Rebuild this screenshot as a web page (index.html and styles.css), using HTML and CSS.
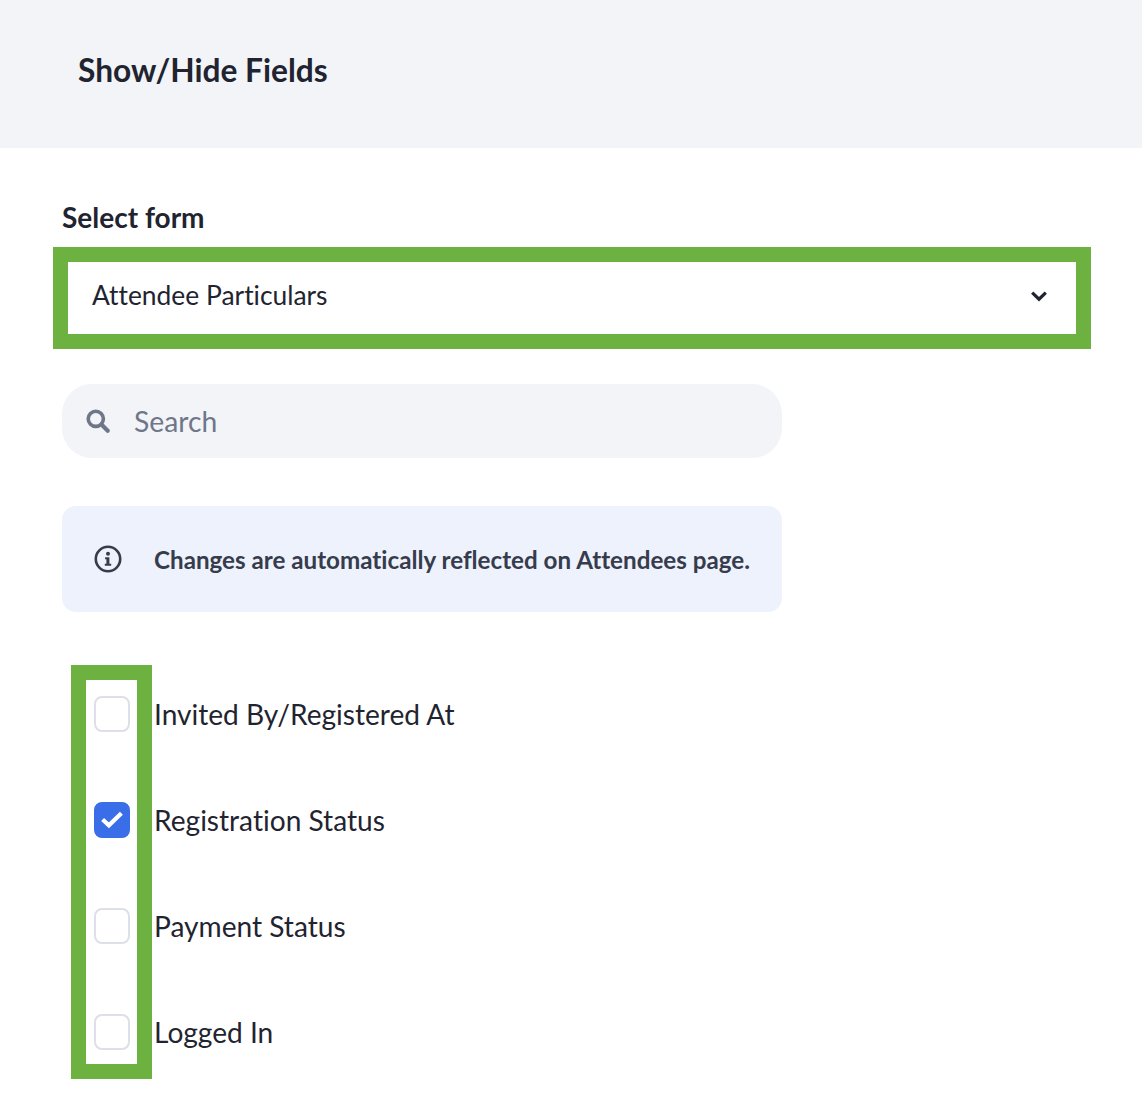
FILE: index.html
```html
<!DOCTYPE html>
<html lang="en">
<head>
<meta charset="utf-8">
<title>Show/Hide Fields</title>
<link rel="stylesheet" href="styles.css">
</head>
<body>
<div class="page">
  <header class="header"><h1 class="title">Show/Hide Fields</h1></header>
  <main class="content">
    <div class="label">Select form</div>
    <div class="select">
      <span>Attendee Particulars</span>
      <svg class="chevron" width="18" height="12" viewBox="0 0 18 12"><path d="M2.2 2.6 9 9.2l6.8-6.6" fill="none" stroke="#1f2430" stroke-width="3.2"/></svg>
    </div>
    <div class="search">
      <svg class="search-icon" width="26" height="26" viewBox="0 0 26 26"><circle cx="10.8" cy="10.8" r="7.6" fill="none" stroke="#6f7689" stroke-width="3.6"/><path d="m16.5 16.5 6.2 6.2" stroke="#6f7689" stroke-width="4.2" stroke-linecap="round"/></svg>
      <span class="search-text">Search</span>
    </div>
    <div class="info">
      <svg class="info-icon" width="28" height="28" viewBox="0 0 28 28"><circle cx="14" cy="14" r="12.2" fill="none" stroke="#363c4c" stroke-width="2.6"/><circle cx="14" cy="8.7" r="2" fill="#363c4c"/><path d="M11.2 12.2H15.4v6.6h1.8v2h-6.4v-2h1.6v-4.6h-1.4z" fill="#363c4c"/></svg>
      <span>Changes are automatically reflected on Attendees page.</span>
    </div>
    <ul class="fields">
      <li class="field"><span class="box"></span><span>Invited By/Registered At</span></li>
      <li class="field"><span class="box checked"><svg width="26" height="22" viewBox="0 0 26 22"><path d="m3.6 10.5 6.3 5.8L22.4 4.3" fill="none" stroke="#fff" stroke-width="4.2"/></svg></span><span>Registration Status</span></li>
      <li class="field"><span class="box"></span><span>Payment Status</span></li>
      <li class="field"><span class="box"></span><span>Logged In</span></li>
    </ul>
  </main>
  <div class="mark mark-select"></div>
  <div class="mark mark-boxes"></div>
</div>
</body>
</html>
```
FILE: styles.css
```css
* { box-sizing: border-box; }
html, body { margin: 0; padding: 0; background: #fff; }
body { font-family: Lato, "Noto Sans", sans-serif; color: #1f2430; font-variant-ligatures: none; }
.page { position: relative; width: 1142px; height: 1102px; overflow: hidden; }
.header { height: 148px; background: #f2f4f8; padding: 0 78px; display: flex; align-items: center; }
.title { margin: 0 0 8px; font-size: 31.7px; font-weight: 700; line-height: 40px; color: #1f2430; }
.content { padding: 51px 0 0 62px; }
.label { font-size: 28px; font-weight: 700; line-height: 36px; }
.select { width: 1028px; height: 72px; margin-top: 27px; padding: 0 42px 6px 30px; display: flex; align-items: center; justify-content: space-between; font-size: 26.4px; }
.chevron { margin-top: 2px; }
.search { width: 720px; height: 74px; margin-top: 50px; padding-left: 23px; border-radius: 30px; background: #f2f4f8; display: flex; align-items: center; }
.search-text { margin-left: 23px; font-size: 28.3px; color: #6f7689; }
.info { width: 720px; height: 106px; margin-top: 48px; padding-left: 32px; border-radius: 14px; background: #edf2fc; display: flex; align-items: center; font-size: 24.2px; font-weight: 700; color: #363c4c; }
.info-icon { margin-right: 32px; flex: none; }
.fields { list-style: none; margin: 49px 0 0; padding: 0 0 0 32px; }
.field { height: 106px; display: flex; align-items: center; gap: 24px; font-size: 28.1px; color: #1f2430; }
.box { width: 36px; height: 36px; flex: none; border: 2px solid #dde0e8; border-radius: 8px; background: #fff; display: flex; align-items: center; justify-content: center; }
.box.checked { background: #3a6ee8; border-color: #3a6ee8; }
.mark { position: absolute; border: 15px solid #6db140; }
.mark-select { left: 53px; top: 247px; width: 1038px; height: 102px; }
.mark-boxes { left: 71px; top: 665px; width: 81px; height: 414px; }
```
